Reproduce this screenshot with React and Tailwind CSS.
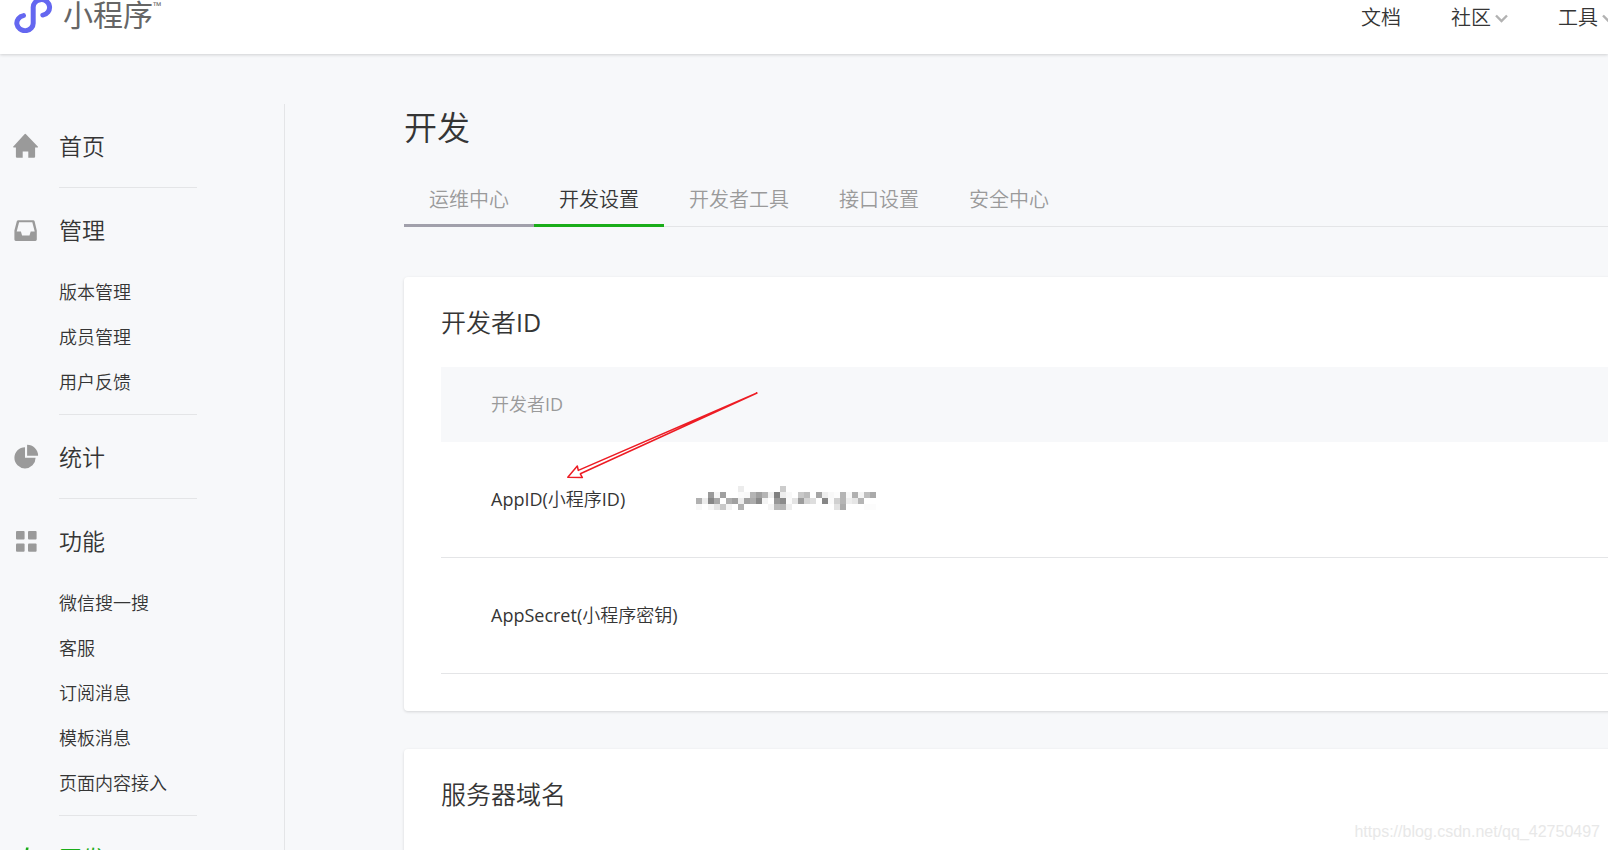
import React from 'react';

const sections = [
  { id: 'home', label: '首页', icon: 'home', items: [] },
  { id: 'manage', label: '管理', icon: 'inbox', items: ['版本管理', '成员管理', '用户反馈'] },
  { id: 'stats', label: '统计', icon: 'pie', items: [] },
  { id: 'features', label: '功能', icon: 'grid', items: ['微信搜一搜', '客服', '订阅消息', '模板消息', '页面内容接入'] },
  { id: 'dev', label: '开发', icon: 'code', items: [], active: true }
];

const tabs = [
  { label: '运维中心', state: 'hover' },
  { label: '开发设置', state: 'active' },
  { label: '开发者工具' },
  { label: '接口设置' },
  { label: '安全中心' }
];

// [column, row, grey level] of the masked AppID
const mosaic = [
  [7, 0, 236], [14, 0, 204],
  [2, 1, 154], [3, 1, 245], [4, 1, 160], [7, 1, 250], [8, 1, 248], [9, 1, 181], [10, 1, 160], [11, 1, 181], [12, 1, 240],
  [13, 1, 128], [14, 1, 238], [15, 1, 248], [17, 1, 200], [18, 1, 188], [20, 1, 165], [21, 1, 238], [22, 1, 248], [23, 1, 252],
  [24, 1, 181], [25, 1, 248], [26, 1, 176], [27, 1, 245], [28, 1, 190], [29, 1, 170],
  [0, 2, 176], [1, 2, 236], [2, 2, 134], [3, 2, 168], [5, 2, 174], [6, 2, 160], [7, 2, 236], [8, 2, 162], [9, 2, 172],
  [10, 2, 138], [11, 2, 244], [13, 2, 152], [14, 2, 138], [15, 2, 250], [16, 2, 228], [17, 2, 156], [18, 2, 212], [19, 2, 222],
  [21, 2, 134], [22, 2, 250], [23, 2, 208], [24, 2, 181], [25, 2, 238], [26, 2, 230], [27, 2, 181],
  [0, 3, 248], [2, 3, 245], [3, 3, 228], [4, 3, 200], [5, 3, 244], [7, 3, 178], [12, 3, 245], [13, 3, 186], [14, 3, 181],
  [15, 3, 238], [23, 3, 226], [24, 3, 172], [28, 3, 251], [29, 3, 252]
];

const Icon = ({ name }) => (
  <svg viewBox="0 0 26 26" className="w-[26px] h-[26px] shrink-0" fill="currentColor" aria-hidden="true">
    {name === 'home' && <path d="M12.5 0.8 L25 13.8 Q25.1 14.6 24.1 14.6 H22.1 V23.7 Q22.1 24.8 21 24.8 H15.3 V18.6 H9.7 V24.8 H4 Q2.9 24.8 2.9 23.7 V14.6 H0.9 Q-0.2 14.6 0.1 13.8 L11.5 1.3 Q12.5 0.3 13.5 1.3 Z" />}
    {name === 'inbox' && <path fillRule="evenodd" d="M5.3 3.2 H20.1 Q21.2 3.2 21.6 4.3 L23.8 13.4 V22.6 Q23.8 24 22.4 24 H2.8 Q1.4 24 1.4 22.6 V13.4 L3.8 4.3 Q4.2 3.2 5.3 3.2 Z M6.1 5.2 L3.7 14.6 H7.9 L9.1 18.4 H16.5 L17.7 14.6 H21.7 L19.3 5.2 Z" />}
    {name === 'pie' && <path d="M12 3.2 V13.8 H22.6 A10.6 10.6 0 1 1 12 3.2 Z M14.1 0.8 A11 11 0 0 1 25.1 11.8 H14.1 Z" />}
    {name === 'grid' && (
      <>
        <rect x="3" y="3" width="8.6" height="8.4" rx="1" />
        <rect x="15" y="3" width="8.6" height="8.4" rx="1" />
        <rect x="3" y="15.4" width="8.6" height="8.4" rx="1" />
        <rect x="15" y="15.4" width="8.6" height="8.4" rx="1" />
      </>
    )}
    {name === 'code' && <path d="M13 2.5 H15.6 L12.6 24 H10 Z M7.4 6 L9.2 7.8 L4.4 13 L9.2 18.2 L7.4 20 L1 13 Z M18.6 6 L25 13 L18.6 20 L16.8 18.2 L21.6 13 L16.8 7.8 Z" />}
  </svg>
);

const Chevron = () => (
  <svg viewBox="0 0 13 9" className="w-[13px] h-[9px] shrink-0" fill="none" stroke="#b2b2b2" strokeWidth="2.4" aria-hidden="true">
    <path d="M1 1.5 L6.5 7 L12 1.5" />
  </svg>
);

const Header = () => (
  <header className="relative flex items-start justify-between h-[54px] bg-white shadow-[0_1px_3px_rgba(0,0,0,0.16)]">
    <a href="#home" className="flex items-start pl-[13px] text-[#666666]">
      <svg viewBox="0 0 40 33" className="w-10 h-[33px]" fill="none" stroke="#6467f0" strokeWidth="5" strokeLinecap="round" aria-hidden="true">
        <path d="M10.5 15.6 A8.2 7.6 0 1 0 20.2 22.6 V8 A8.2 7.8 0 1 1 29.8 15.1" />
      </svg>
      <span className="ml-[10px] text-[30px] leading-[30px] font-normal">小程序</span>
      <span className="text-[11px] leading-3 font-normal">™</span>
    </a>
    <nav className="flex items-center gap-[50px] h-9 -mr-[7px] text-[20px] shrink-0">
      <a href="#docs">文档</a>
      <a href="#community" className="flex items-center gap-1">社区<Chevron /></a>
      <a href="#tools" className="flex items-center gap-1">工具<Chevron /></a>
    </nav>
  </header>
);

const Sidebar = () => (
  <aside className="w-[285px] shrink-0 border-r border-[#e4e5e7] pl-[13px]">
    {sections.map((s) => (
      <section key={s.id}>
        <div className="pt-[22px] pb-[21px]">
          <a href={`#${s.id}`} className={s.active ? 'flex items-center gap-5 h-10 text-[#1aad19]' : 'flex items-center gap-5 h-10 text-[#9a9a9a]'}>
            <Icon name={s.icon} />
            <span className={s.active ? 'text-[23px]' : 'text-[23px] text-[#353535]'}>{s.label}</span>
          </a>
        </div>
        {s.items.length > 0 && (
          <ul className="-mt-px pl-[46px] pb-[9px]">
            {s.items.map((item) => (
              <li key={item}><a href={`#${item}`} className="block text-[18px] leading-[45px]">{item}</a></li>
            ))}
          </ul>
        )}
        <hr className="ml-[46px] w-[138px] border-[#e4e5e7]" />
      </section>
    ))}
  </aside>
);

const Tab = ({ label, state }) => {
  let look = 'border-transparent text-[#9a9a9a]';
  if (state === 'active') look = 'border-[#1aad19] text-[#353535]';
  if (state === 'hover') look = 'border-[#a1a0ab] text-[#9a9a9a]';
  return (
    <button type="button" role="tab" aria-selected={state === 'active'} className={`-mb-px px-[25px] pt-[6px] h-[57px] border-b-3 text-[20px] leading-[48px] ${look}`}>
      {label}
    </button>
  );
};

// latin letters need the regular weight beside the thin CJK ones
const Latin = ({ children }) => <span className="font-normal">{children}</span>;

const Arrow = () => (
  <svg viewBox="0 0 192 88" className="absolute left-[162px] top-[114px] w-[192px] h-[88px] pointer-events-none" fill="none" stroke="#ed1c24" strokeWidth="1.5" strokeLinejoin="round" aria-hidden="true">
    <path d="M191 2 L12.3 79.4 L11.3 75 L1.8 86.2 L16.4 86.6 L14.3 82.8 Z" />
  </svg>
);

const DeveloperId = () => (
  <section className="relative px-[37px] pb-[37px] bg-white rounded-[4px] shadow-[0_1px_3px_rgba(0,0,0,0.14)]">
    <h2 className="h-[90px] text-[25px] leading-[90px]">开发者<Latin>ID</Latin></h2>
    <table className="w-full border-separate border-spacing-0 text-left text-[18px]">
      <thead>
        <tr className="h-[75px] bg-[#f7f8fa] text-[#9a9a9a]">
          <th colSpan="2" scope="col" className="pl-[50px] font-[350]">开发者<Latin>ID</Latin></th>
        </tr>
      </thead>
      <tbody>
        <tr className="h-[116px]">
          <td className="pl-[50px] w-[255px] border-b border-[#e4e5e7]"><Latin>AppID(</Latin>小程序<Latin>ID)</Latin></td>
          <td className="pb-1 border-b border-[#e4e5e7]">
            <svg viewBox="0 0 30 4" className="block w-[180px] h-6" shapeRendering="crispEdges" aria-hidden="true">
              {mosaic.map(([x, y, g]) => <rect key={`${x}-${y}`} x={x} y={y} width="1" height="1" fill={`rgb(${g},${g},${g})`} />)}
            </svg>
          </td>
        </tr>
        <tr className="h-[116px]">
          <td className="pl-[50px] border-b border-[#e4e5e7]"><Latin>AppSecret(</Latin>小程序密钥<Latin>)</Latin></td>
          <td className="border-b border-[#e4e5e7]"></td>
        </tr>
      </tbody>
    </table>
    <Arrow />
  </section>
);

const App = () => (
  <div className="relative flex flex-col h-screen overflow-hidden bg-[#f7f8fa] text-[#353535] font-[350] font-['Open_Sans','Noto_Sans_CJK_SC',sans-serif]">
    <Header />
    <div className="flex flex-1 min-h-0 pt-[50px]">
      <Sidebar />
      <main className="flex-1 min-w-0 pl-[119px] -mr-12">
        <h1 className="text-[33px] leading-[48px]">开发</h1>
        <div role="tablist" className="flex mt-[18px] border-b border-[#e4e5e7]">
          {tabs.map((t) => <Tab key={t.label} {...t} />)}
        </div>
        <div className="flex flex-col gap-[38px] mt-[50px]">
          <DeveloperId />
          <section className="h-[300px] px-[37px] bg-white rounded-[4px] shadow-[0_1px_3px_rgba(0,0,0,0.14)]">
            <h2 className="text-[25px] leading-[90px]">服务器域名</h2>
          </section>
        </div>
      </main>
    </div>
    <p className="absolute right-2 bottom-2 text-[16px] leading-5 font-normal text-[#e8e8e8] font-['Liberation_Sans',sans-serif]">https://blog.csdn.net/qq_42750497</p>
  </div>
);

export default App;
